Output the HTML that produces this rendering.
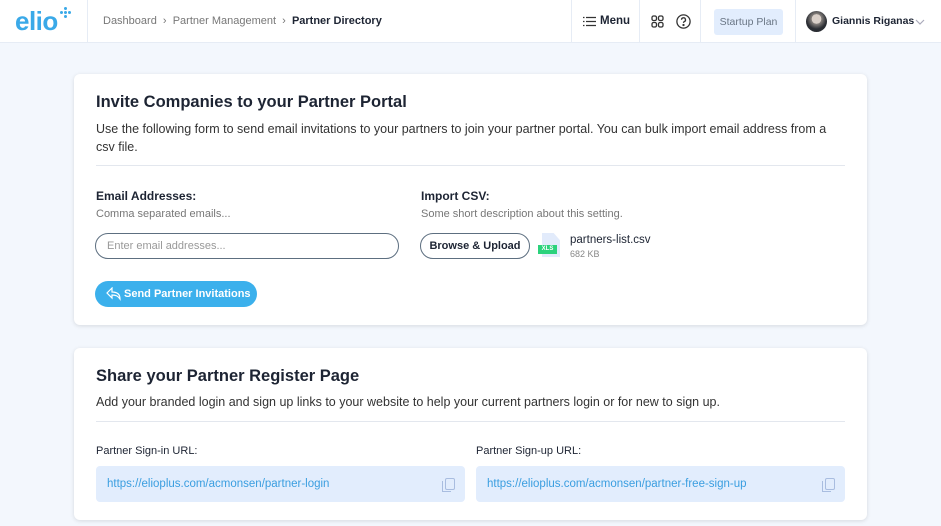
<!DOCTYPE html>
<html><head><meta charset="utf-8"><style>
*{margin:0;padding:0;box-sizing:border-box}
body{width:941px;height:526px;overflow:hidden;background:#f3f7fd;font-family:"Liberation Sans",sans-serif;color:#1d2433;position:relative}
.a{position:absolute}
.hdr{left:0;top:0;width:941px;height:43px;background:#fff;border-bottom:1px solid #e6ecf5}
.vl{top:0;width:1px;height:43px;background:#e6ecf5}
.card{background:#fff;border-radius:6px;box-shadow:0 1px 4px rgba(0,0,0,.12);left:74px;width:793px}
h2{font-size:16.5px;font-weight:bold;color:#1d2433}
.t{font-size:12.5px;color:#333}
.s{font-size:11px;color:#777}
.b{font-size:12px;font-weight:bold}
.url{background:#e2edfd;border-radius:4px;height:36px;width:369px;font-size:11.5px;color:#3a9ee0;padding:12px 11px}
.cp{right:10px;top:12px;width:10px;height:12px;border:1.3px solid #a9bde0;border-radius:2px}
.cp:before{content:"";position:absolute;left:-4px;top:2px;width:8px;height:10px;border-left:1.3px solid #a9bde0;border-bottom:1.3px solid #a9bde0}
</style></head><body>
<div class="a hdr"></div>
<div class="a" style="left:15px;top:6px;font-size:26px;font-weight:bold;color:#3aa9e8;letter-spacing:-0.5px">elio</div>
<div class="a" style="left:60px;top:7px;width:12px;height:12px">
<span class="a" style="left:4px;top:0;width:3px;height:3px;background:#3aa9e8;border-radius:50%"></span>
<span class="a" style="left:0;top:4px;width:3px;height:3px;background:#3aa9e8;border-radius:50%"></span>
<span class="a" style="left:4px;top:4px;width:3px;height:3px;background:#3aa9e8;border-radius:50%"></span>
<span class="a" style="left:8px;top:4px;width:3px;height:3px;background:#3aa9e8;border-radius:50%"></span>
<span class="a" style="left:4px;top:8px;width:3px;height:3px;background:#3aa9e8;border-radius:50%"></span>
</div>
<div class="a vl" style="left:87px"></div>
<div class="a" style="left:103px;top:15px;font-size:11px;color:#777">Dashboard &nbsp;›&nbsp; Partner Management &nbsp;›&nbsp; <span style="color:#1d2433;font-weight:bold">Partner Directory</span></div>
<div class="a vl" style="left:571px"></div>
<svg class="a" style="left:583px;top:16px" width="13" height="11"><g stroke="#333" stroke-width="1.2"><path d="M3 1.5h10M3 5.5h10M3 9.5h10"/><path d="M0 1.5h1.5M0 5.5h1.5M0 9.5h1.5"/></g></svg>
<div class="a b" style="left:600px;top:15px;font-size:11.5px">Menu</div>
<div class="a vl" style="left:639px"></div>
<svg class="a" style="left:651px;top:15px" width="13" height="13" fill="none" stroke="#333" stroke-width="1.3"><rect x="1" y="1" width="4.5" height="4.5" rx="1.5"/><rect x="7.5" y="1" width="4.5" height="4.5" rx="1.5"/><rect x="1" y="7.5" width="4.5" height="4.5" rx="1.5"/><rect x="7.5" y="7.5" width="4.5" height="4.5" rx="1.5"/></svg>
<svg class="a" style="left:676px;top:14px" width="15" height="15" fill="none" stroke="#333" stroke-width="1.3"><circle cx="7.5" cy="7.5" r="6.6"/><path d="M5.5 5.8a2 2 0 1 1 2.6 1.9c-.5.2-.6.6-.6 1.2"/><circle cx="7.5" cy="11" r=".5" fill="#333"/></svg>
<div class="a vl" style="left:700px"></div>
<div class="a" style="left:714px;top:9px;width:69px;height:26px;background:#e2edfd;border-radius:3px;font-size:10.5px;color:#6a7685;text-align:center;line-height:26px">Startup Plan</div>
<div class="a vl" style="left:795px"></div>
<div class="a" style="left:806px;top:11px;width:21px;height:21px;border-radius:50%;background:radial-gradient(circle at 50% 38%,#d9cfc8 0 28%,#8a8480 29%,#2a2d33 60%)"></div>
<div class="a b" style="left:832px;top:15px;font-size:10.5px">Giannis Riganas</div>
<svg class="a" style="left:915px;top:19px" width="10" height="6"><path d="M1 1l4 4 4-4" fill="none" stroke="#aab" stroke-width="1.2"/></svg>

<div class="a card" style="top:74px;height:251px"></div>
<h2 class="a" style="left:96px;top:93px">Invite Companies to your Partner Portal</h2>
<div class="a t" style="left:96px;top:120px;width:740px;line-height:18px">Use the following form to send email invitations to your partners to join your partner portal. You can bulk import email address from a csv file.</div>
<div class="a" style="left:96px;top:165px;width:749px;height:1px;background:#e3e7ee"></div>
<div class="a b" style="left:96px;top:189px">Email Addresses:</div>
<div class="a s" style="left:96px;top:208px">Comma separated emails...</div>
<div class="a" style="left:95px;top:233px;width:304px;height:26px;border:1px solid #5d6f80;border-radius:13px;font-size:11px;color:#999;padding:6px 11px">Enter email addresses...</div>
<div class="a b" style="left:421px;top:189px">Import CSV:</div>
<div class="a s" style="left:421px;top:208px">Some short description about this setting.</div>
<div class="a" style="left:420px;top:233px;width:110px;height:26px;border:1px solid #5d6f80;border-radius:13px;font-size:11px;font-weight:bold;text-align:center;line-height:24px">Browse &amp; Upload</div>
<div class="a" style="left:542px;top:233px;width:18px;height:24px;background:#e2ebfb;clip-path:polygon(0 0,65% 0,100% 30%,100% 100%,0 100%)"></div>
<div class="a" style="left:538px;top:245px;width:19px;height:9px;background:#2bd27c;color:#fff;font-size:6px;font-weight:bold;text-align:center;line-height:9px">XLS</div>
<div class="a" style="left:570px;top:234px;font-size:11.5px">partners-list.csv</div>
<div class="a" style="left:570px;top:249px;font-size:9px;color:#888">682 KB</div>
<div class="a" style="left:95px;top:281px;width:162px;height:26px;background:#3bb0ec;border-radius:13px;color:#fff;font-size:11px;font-weight:bold;line-height:26px;padding-left:29px">Send Partner Invitations</div>
<svg class="a" style="left:106px;top:287px" width="16" height="14" fill="none" stroke="#fff" stroke-width="1.2"><path d="M6 1L1 6l5 5V8c4 0 6 1 8 4 0-4-2-7-8-7z"/></svg>

<div class="a card" style="top:348px;height:172px"></div>
<h2 class="a" style="left:96px;top:367px">Share your Partner Register Page</h2>
<div class="a t" style="left:96px;top:395px">Add your branded login and sign up links to your website to help your current partners login or for new to sign up.</div>
<div class="a" style="left:96px;top:421px;width:749px;height:1px;background:#e3e7ee"></div>
<div class="a" style="left:96px;top:445px;font-size:11px">Partner Sign-in URL:</div>
<div class="a" style="left:476px;top:445px;font-size:11px">Partner Sign-up URL:</div>
<div class="a url" style="left:96px;top:466px">https://elioplus.com/acmonsen/partner-login<span class="a cp"></span></div>
<div class="a url" style="left:476px;top:466px">https://elioplus.com/acmonsen/partner-free-sign-up<span class="a cp"></span></div>
</body></html>
